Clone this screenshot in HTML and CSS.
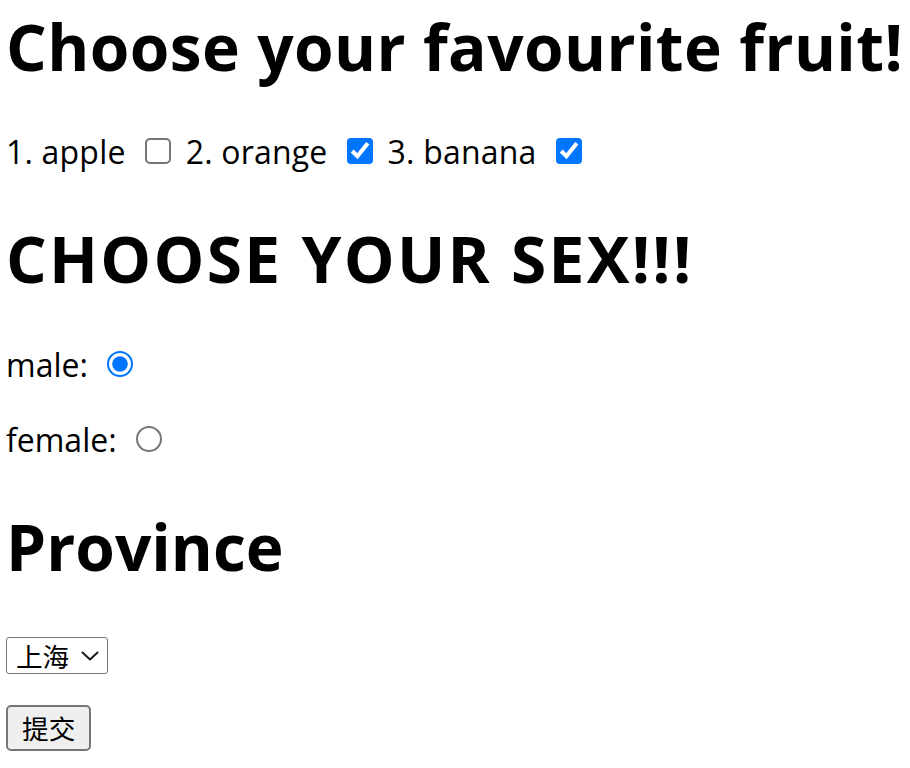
FILE: index.html
```html
<!DOCTYPE html>
<html lang="zh-CN">
<head>
<meta charset="utf-8">
<title>Form</title>
<link rel="stylesheet" href="styles.css">
</head>
<body>
<form class="page">
  <h1 class="title first">Choose your favourite fruit!</h1>
  <p class="row fruits">1. apple <input class="ctl-check" type="checkbox" name="fruit" value="apple"> 2. orange <input class="ctl-check" type="checkbox" name="fruit" value="orange" checked> 3. banana <input class="ctl-check" type="checkbox" name="fruit" value="banana" checked></p>
  <h1 class="title caps">CHOOSE YOUR SEX!!!</h1>
  <p class="row">male: <input class="ctl-radio" type="radio" name="sex" value="male" checked></p>
  <p class="row">female: <input class="ctl-radio" type="radio" name="sex" value="female"></p>
  <h1 class="title tight">Province</h1>
  <p class="row"><span class="select-wrap"><select class="ctl-select" name="province"><option>上海</option><option>北京</option><option>广州</option></select><svg class="chevron" width="18" height="10" viewBox="0 0 18 10" aria-hidden="true"><path d="M1.5 1.5 L9 8.5 L16.5 1.5" fill="none" stroke="#1a1a1a" stroke-width="2" stroke-linecap="round" stroke-linejoin="round"/></svg></span></p>
  <p class="row"><button class="ctl-button" type="button">提交</button></p>
</form>
</body>
</html>
```
FILE: styles.css
```css
html, body {
  margin: 0;
  padding: 0;
  background: #fff;
}
body {
  color: #000;
  font-family: "Open Sans", "Noto Sans CJK SC", sans-serif;
  font-size: 32px;
  line-height: 1.33;
}
.page {
  padding: 5px 0 0 6px;
}
.title {
  font-size: 64px;
  font-weight: 700;
  line-height: 1.3;
  margin: 43px 0;
  white-space: nowrap;
  letter-spacing: 0.4px;
}
.title.first {
  margin-top: 0;
}
.title.caps {
  letter-spacing: 2.3px;
}
.title.tight {
  letter-spacing: 0;
}
.row {
  margin: 32px 0;
}
.fruits {
  letter-spacing: 0.2px;
}
.ctl-check,
.ctl-radio {
  zoom: 2;
  vertical-align: baseline;
}
.ctl-check {
  margin: 3px 3px 3px 5.5px;
}
.ctl-radio {
  margin: 4px 3px 0 5.5px;
}
.select-wrap {
  position: relative;
  display: inline-block;
  vertical-align: top;
  margin-top: 6px;
  line-height: 0;
}
.ctl-select {
  -webkit-appearance: none;
  appearance: none;
  box-sizing: border-box;
  width: 102px;
  height: 37px;
  margin: 0;
  padding: 0 30px 0 9px;
  border: 1px solid #767676;
  border-radius: 3px;
  background: #fff;
  color: #000;
  font-family: "Noto Sans CJK SC", sans-serif;
  font-size: 26.6px;
  line-height: 35px;
}
.chevron {
  position: absolute;
  right: 9px;
  top: 14px;
  pointer-events: none;
}
.ctl-button {
  zoom: 2;
  font-family: "Noto Sans CJK SC", sans-serif;
  font-size: 13.33px;
  letter-spacing: 0;
  vertical-align: top;
  line-height: 1.3;
  height: 23px;
  margin: -0.75px 0 0;
}
```
